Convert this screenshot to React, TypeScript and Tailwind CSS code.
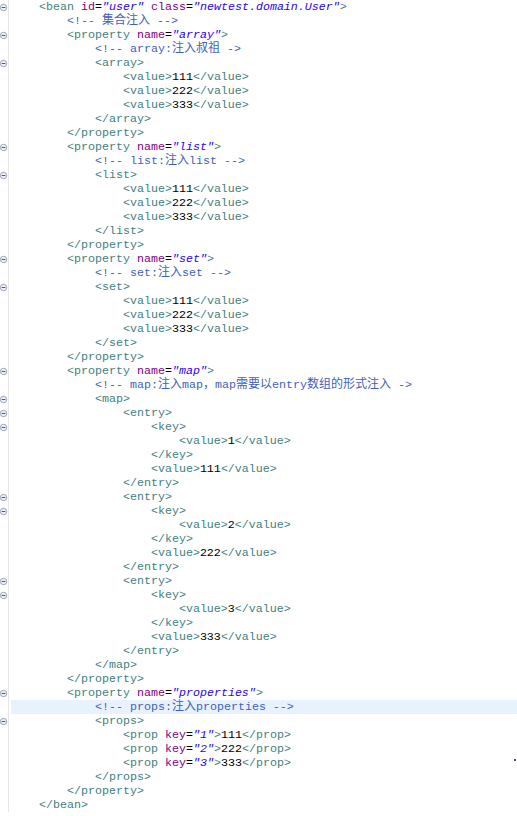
type Seg = [string, string];

const C: Record<string, string> = {
  t: "text-[#3f7f7f]",
  a: "text-[#7f007f]",
  v: "text-[#2a00ff] italic",
  c: "text-[#3f5fbf]",
  x: "text-black",
};

const ind = (n: number) => " ".repeat(n * 4);

const open = (n: number, name: string, attrs: [string, string][] = []): Seg[] => {
  const s: Seg[] = [["x", ind(n)], ["t", "<" + name]];
  attrs.forEach(([k, v]) => {
    s.push(["x", " "], ["a", k], ["x", "="], ["v", `"${v}"`]);
  });
  s.push(["t", ">"]);
  return s;
};
const close = (n: number, name: string): Seg[] => [["x", ind(n)], ["t", `</${name}>`]];
const comment = (n: number, text: string): Seg[] => [["x", ind(n)], ["c", text]];
const value = (n: number, v: string): Seg[] => [
  ["x", ind(n)],
  ["t", "<value>"],
  ["x", v],
  ["t", "</value>"],
];
const prop = (n: number, k: string, v: string): Seg[] => [
  ["x", ind(n)],
  ["t", "<prop"],
  ["x", " "],
  ["a", "key"],
  ["x", "="],
  ["v", `"${k}"`],
  ["t", ">"],
  ["x", v],
  ["t", "</prop>"],
];

type Line = { segs: Seg[]; fold?: boolean; active?: boolean };

const collection = (name: string, note: string): Line[] => [
  { segs: open(2, "property", [["name", name]]), fold: true },
  { segs: comment(3, note) },
  { segs: open(3, name), fold: true },
  { segs: value(4, "111") },
  { segs: value(4, "222") },
  { segs: value(4, "333") },
  { segs: close(3, name) },
  { segs: close(2, "property") },
];

const entry = (k: string, v: string): Line[] => [
  { segs: open(4, "entry"), fold: true },
  { segs: open(5, "key"), fold: true },
  { segs: value(6, k) },
  { segs: close(5, "key") },
  { segs: value(5, v) },
  { segs: close(4, "entry") },
];

const lines: Line[] = [
  { segs: open(1, "bean", [["id", "user"], ["class", "newtest.domain.User"]]), fold: true },
  { segs: comment(2, "<!-- 集合注入 -->") },
  ...collection("array", "<!-- array:注入叔祖 ->"),
  ...collection("list", "<!-- list:注入list -->"),
  ...collection("set", "<!-- set:注入set -->"),
  { segs: open(2, "property", [["name", "map"]]), fold: true },
  { segs: comment(3, "<!-- map:注入map，map需要以entry数组的形式注入 ->") },
  { segs: open(3, "map"), fold: true },
  ...entry("1", "111"),
  ...entry("2", "222"),
  ...entry("3", "333"),
  { segs: close(3, "map") },
  { segs: close(2, "property") },
  { segs: open(2, "property", [["name", "properties"]]), fold: true },
  { segs: comment(3, "<!-- props:注入properties -->"), active: true },
  { segs: open(3, "props"), fold: true },
  { segs: prop(4, "1", "111") },
  { segs: prop(4, "2", "222") },
  { segs: prop(4, "3", "333") },
  { segs: close(3, "props") },
  { segs: close(2, "property") },
  { segs: close(1, "bean") },
];

function Text({ text }: { text: string }) {
  const parts = text.split(/([\u3000-\u9fff\uff00-\uffef]+)/);
  return (
    <>
      {parts.map((p, i) =>
        i % 2 === 1 ? (
          <span key={i} className="text-[12px]">
            {p}
          </span>
        ) : (
          p
        )
      )}
    </>
  );
}

function FoldIcon() {
  return (
    <svg width="9" height="9" viewBox="0 0 9 9">
      <circle cx="4" cy="4.5" r="3.6" fill="#eef1f6" stroke="#8e9cb0" strokeWidth="1" />
      <line x1="2" y1="4.5" x2="6" y2="4.5" stroke="#3a4656" strokeWidth="1" />
    </svg>
  );
}

export default function App() {
  return (
    <div className="relative h-[816px] w-[517px] overflow-hidden bg-white font-['Liberation_Mono','Noto_Sans_CJK_SC',monospace] text-[11.67px] leading-[14px]">
      {lines.map((l, i) => (
        <div key={i} className="flex h-[14px]">
          <div className="flex w-[9px] shrink-0 items-center border-r border-[#e6e6e6]">
            {l.fold && <FoldIcon />}
          </div>
          <div className="w-[2px] shrink-0" />
          <div className={`flex-1 whitespace-pre ${l.active ? "bg-[#e8f2fe]" : ""}`}>
            {l.segs.map(([k, t], j) => (
              <span key={j} className={C[k]}>
                {k === "c" ? <Text text={t} /> : t}
              </span>
            ))}
          </div>
        </div>
      ))}
      <div className="absolute left-[514px] top-[759px] h-[2px] w-[2px] bg-[#3040ff]" />
    </div>
  );
}
